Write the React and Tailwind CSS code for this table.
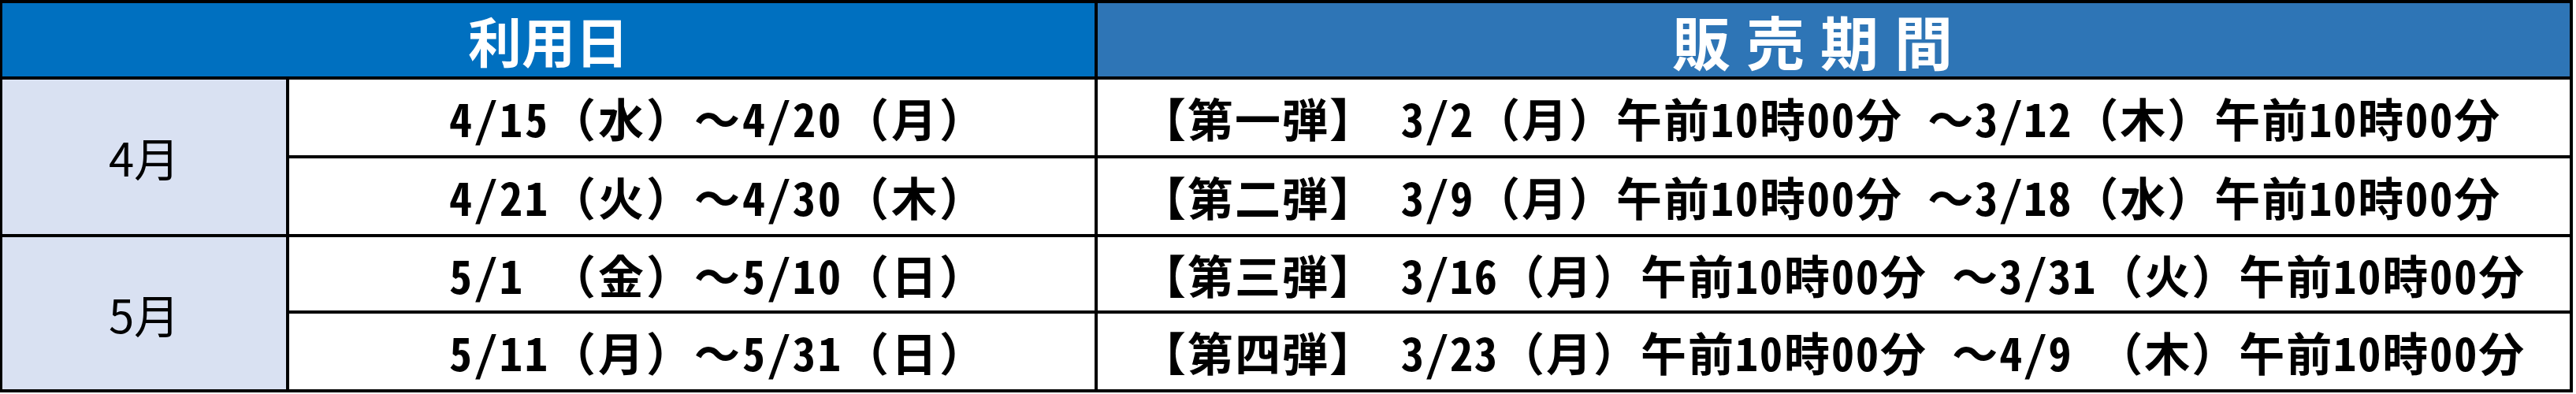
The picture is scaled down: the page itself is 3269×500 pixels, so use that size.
import React from "react";

const F = "font-['Noto_Sans_CJK_JP','Noto_Sans_CJK_SC',sans-serif]";

const dates = [
  "4/15（水）～4/20（月）",
  "4/21（火）～4/30（木）",
  "5/1 （金）～5/10（日）",
  "5/11（月）～5/31（日）",
];

const sales = [
  "【第一弾】 3/2（月）午前10時00分 ～3/12（木）午前10時00分",
  "【第二弾】 3/9（月）午前10時00分 ～3/18（水）午前10時00分",
  "【第三弾】 3/16（月）午前10時00分 ～3/31（火）午前10時00分",
  "【第四弾】 3/23（月）午前10時00分 ～4/9 （木）午前10時00分",
];

function Mixed({ text }) {
  const parts = text.match(/[\x20-\x7e]+|[^\x20-\x7e]+/g) || [];
  return (
    <>
      {parts.map((p, i) =>
        /^[\x20-\x7e]+$/.test(p) ? (
          <span key={i} className="[font-feature-settings:'hwid']">
            {p}
          </span>
        ) : (
          <span key={i}>{p}</span>
        )
      )}
    </>
  );
}

const dateCls =
  "bg-white flex items-center pl-[203px] text-black font-bold text-[58px] tracking-[3px] leading-none whitespace-pre";
const saleCls =
  "bg-white flex items-center pl-[54px] text-black font-bold text-[58px] tracking-[2px] leading-none whitespace-pre";

export default function App() {
  return (
    <div className="bg-white w-[3269px] h-[500px]">
      <div
        className={`w-[3265px] bg-black pt-[4px] pb-[4px] pl-[3px] pr-[4px] grid grid-cols-[360px_1022px_1868px] grid-rows-[93px_96px_96px_93px_96px] gap-[4px] ${F}`}
      >
        <div className="col-span-2 bg-[#0070C0] flex items-center justify-center text-white font-bold text-[68px] leading-none">
          利用日
        </div>
        <div className="bg-[#2E75B6] flex items-center justify-center pr-[34px] text-white font-bold text-[74px] tracking-[20px] leading-none">
          販売期間
        </div>

        <div className="row-span-2 bg-[#D9E1F2] flex items-center justify-center text-black text-[58px] leading-none">
          4月
        </div>
        <div className={dateCls}>
          <Mixed text={dates[0]} />
        </div>
        <div className={saleCls}>
          <Mixed text={sales[0]} />
        </div>
        <div className={dateCls}>
          <Mixed text={dates[1]} />
        </div>
        <div className={saleCls}>
          <Mixed text={sales[1]} />
        </div>

        <div className="row-span-2 bg-[#D9E1F2] flex items-center justify-center text-black text-[58px] leading-none">
          5月
        </div>
        <div className={dateCls}>
          <Mixed text={dates[2]} />
        </div>
        <div className={saleCls}>
          <Mixed text={sales[2]} />
        </div>
        <div className={dateCls}>
          <Mixed text={dates[3]} />
        </div>
        <div className={saleCls}>
          <Mixed text={sales[3]} />
        </div>
      </div>
    </div>
  );
}
